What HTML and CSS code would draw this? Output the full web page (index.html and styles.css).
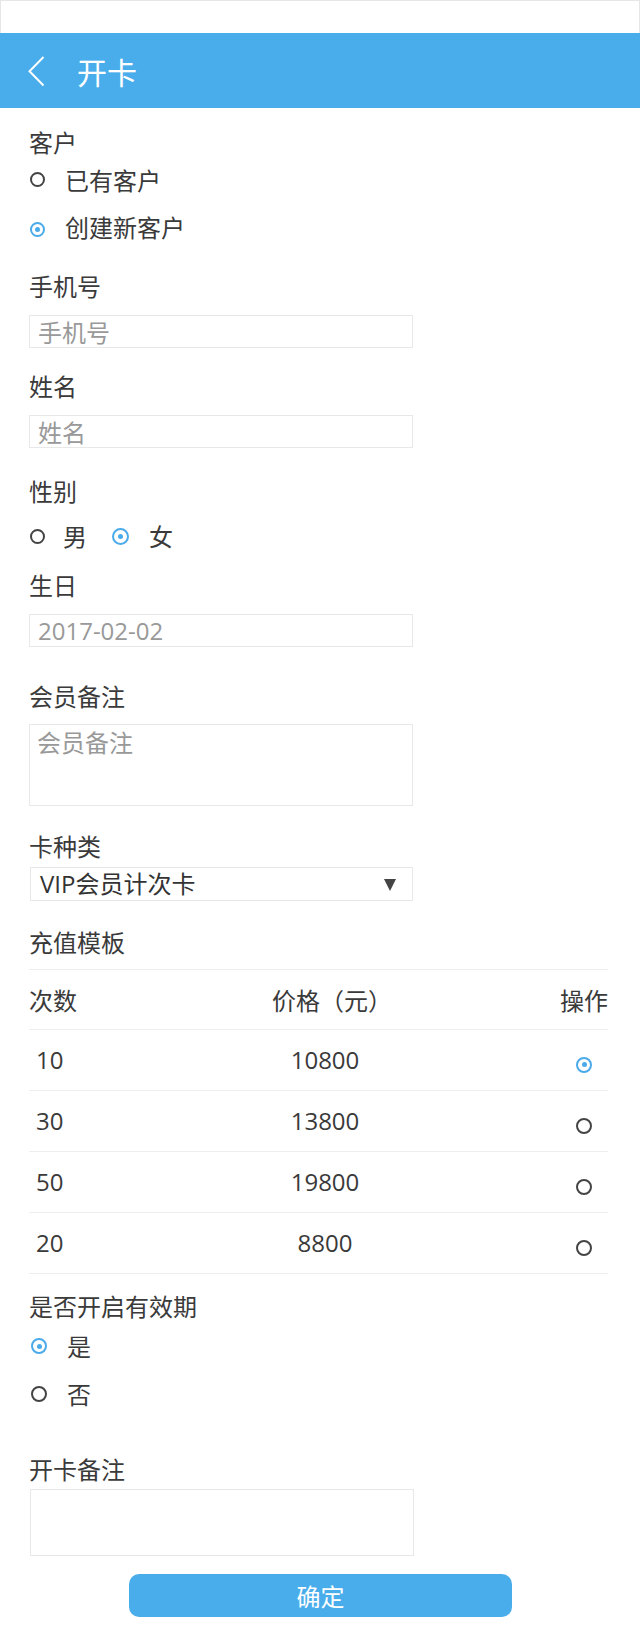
FILE: index.html
```html
<!DOCTYPE html>
<html lang="zh-CN">
<head>
<meta charset="utf-8">
<title>开卡</title>
<link rel="stylesheet" href="styles.css">
</head>
<body>
<div class="status"></div>
<header class="topbar">
  <svg class="back" width="17" height="31" viewBox="0 0 17 31" aria-hidden="true"><path d="M15.5 1 L1.5 15.2 L15.5 29.5" fill="none" stroke="#fff" stroke-width="2"/></svg>
  <h1 class="title">开卡</h1>
</header>
<main class="form">
  <section class="field">
    <div class="label">客户</div>
    <label class="opt opt-a"><input type="radio" name="cust"><span>已有客户</span></label>
    <label class="opt opt-b"><input type="radio" name="cust" checked><span>创建新客户</span></label>
  </section>

  <section class="field f-phone">
    <div class="label">手机号</div>
    <input class="box" type="text" placeholder="手机号">
  </section>

  <section class="field f-name">
    <div class="label">姓名</div>
    <input class="box" type="text" placeholder="姓名">
  </section>

  <section class="field f-sex">
    <div class="label">性别</div>
    <div class="inline-opts">
      <label class="opt-inline"><input type="radio" name="sex"><span>男</span></label>
      <label class="opt-inline"><input type="radio" name="sex" checked><span>女</span></label>
    </div>
  </section>

  <section class="field f-birth">
    <div class="label">生日</div>
    <input class="box latin" type="text" placeholder="2017-02-02">
  </section>

  <section class="field f-memo">
    <div class="label">会员备注</div>
    <textarea class="area" placeholder="会员备注"></textarea>
  </section>

  <section class="field f-kind">
    <div class="label">卡种类</div>
    <div class="select"><span class="latin">VIP会员计次卡</span><i class="caret"></i></div>
  </section>

  <section class="field f-tpl">
    <div class="label">充值模板</div>
    <div class="table">
      <div class="row head">
        <div class="c1">次数</div>
        <div class="c2 price-head">价格（元）</div>
        <div class="c3">操作</div>
      </div>
      <div class="row latin">
        <div class="c1 num">10</div>
        <div class="c2">10800</div>
        <div class="c3"><input class="tradio" type="radio" name="tpl" checked></div>
      </div>
      <div class="row latin">
        <div class="c1 num">30</div>
        <div class="c2">13800</div>
        <div class="c3"><input class="tradio" type="radio" name="tpl"></div>
      </div>
      <div class="row latin">
        <div class="c1 num">50</div>
        <div class="c2">19800</div>
        <div class="c3"><input class="tradio" type="radio" name="tpl"></div>
      </div>
      <div class="row latin">
        <div class="c1 num">20</div>
        <div class="c2">8800</div>
        <div class="c3"><input class="tradio" type="radio" name="tpl"></div>
      </div>
    </div>
  </section>

  <section class="field f-valid">
    <div class="label">是否开启有效期</div>
    <label class="opt opt-c"><input type="radio" name="valid" checked><span>是</span></label>
    <label class="opt opt-d"><input type="radio" name="valid"><span>否</span></label>
  </section>

  <section class="field f-cardmemo">
    <div class="label">开卡备注</div>
    <textarea class="area area-small"></textarea>
  </section>

  <button class="submit" type="button">确定</button>
</main>
</body>
</html>
```

FILE: styles.css
```css
* { box-sizing: border-box; }
html, body { margin: 0; padding: 0; background: #fff; }
body {
  font-family: "Noto Sans CJK SC", "Noto Sans", sans-serif;
  color: #3a3a3a;
  width: 640px;
}
.latin { font-family: "Open Sans", "Noto Sans CJK SC", sans-serif; }
.status {
  height: 33px;
  border: 1px solid #e6e6e6;
  border-bottom: none;
  background: #fff;
}
.topbar {
  height: 75px;
  background: #4aadeb;
  display: flex;
  align-items: center;
  padding-left: 28px;
}
.back { display: block; margin-top: 1px; }
.title {
  margin: 0 0 0 32px;
  font-size: 30px;
  font-weight: normal;
  line-height: 34px;
  color: #fff;
}
.form {
  padding: 19px 0 16px 29px;
}
.label {
  font-size: 24px;
  line-height: 30px;
  height: 30px;
}
.opt {
  display: flex;
  align-items: center;
  height: 30px;
  font-size: 24px;
  line-height: 30px;
}
.opt input, .opt-inline input, .tradio {
  appearance: none;
  -webkit-appearance: none;
  width: 15px;
  height: 15px;
  margin: 0;
  border: 2px solid #444;
  border-radius: 50%;
  background: #fff;
  position: relative;
  flex: none;
}
.opt input:checked, .opt-inline input:checked, .tradio:checked {
  border-color: #4aaaea;
}
.opt input:checked::after, .opt-inline input:checked::after, .tradio:checked::after {
  content: "";
  position: absolute;
  left: 50%;
  top: 50%;
  width: 5px;
  height: 5px;
  margin: -2.5px 0 0 -2.5px;
  border-radius: 50%;
  background: #4aaaea;
}
.opt input { margin-left: 1px; margin-right: 20px; }
.opt-a { margin-top: 8px; }
.opt-a input { margin-top: -2px; }
.opt-b { margin-top: 17px; }
.opt-b input { margin-top: 4px; }
.opt-c { margin-top: 10px; }
.opt-d { margin-top: 18px; }
.opt-c input, .opt-d input { width: 16px; height: 16px; margin-left: 2px; margin-right: 20px; }

.f-phone { margin-top: 29px; }
.f-name { margin-top: 23px; }
.f-sex { margin-top: 28px; }
.f-birth { margin-top: 19px; }
.f-memo { margin-top: 34px; }
.f-kind { margin-top: 25px; }
.f-tpl { margin-top: 26px; }
.f-valid { margin-top: 17px; }
.f-cardmemo { margin-top: 45px; }

.box {
  display: block;
  margin-top: 14px;
  width: 384px;
  height: 33px;
  border: 1px solid #e8e8e8;
  padding: 0 8px;
  font-family: "Noto Sans CJK SC", sans-serif;
  font-size: 24px;
  color: #3a3a3a;
  outline: none;
  background: #fff;
}
.box.latin { font-family: "Open Sans", "Noto Sans CJK SC", sans-serif; }
.box::placeholder, .area::placeholder { color: #999; opacity: 1; }
.area {
  display: block;
  margin-top: 13px;
  width: 384px;
  height: 82px;
  border: 1px solid #e8e8e8;
  padding: 2px 7px;
  font-family: inherit;
  font-size: 24px;
  line-height: 30px;
  resize: none;
  outline: none;
}
.area-small {
  margin-top: 5px;
  margin-left: 1px;
  height: 67px;
}
.inline-opts {
  margin-top: 15px;
  display: flex;
  align-items: center;
  height: 30px;
  font-size: 24px;
  line-height: 30px;
}
.opt-inline {
  display: flex;
  align-items: center;
  margin-right: 25px;
}
.opt-inline input { margin-left: 1px; margin-right: 18px; }
.opt-inline + .opt-inline input { width: 17px; height: 17px; margin-left: 0; margin-right: 20px; }

.select {
  margin-top: 6px;
  margin-left: 1px;
  width: 383px;
  height: 34px;
  border: 1px solid #e8e8e8;
  display: flex;
  align-items: center;
  justify-content: space-between;
  padding: 0 16px 0 9px;
  font-size: 24px;
  line-height: 30px;
  color: #333;
}
.caret {
  width: 0;
  height: 0;
  border-left: 6.5px solid transparent;
  border-right: 6.5px solid transparent;
  border-top: 12px solid #444;
  margin-top: 2px;
}

.table {
  margin-top: 12px;
  width: 579px;
  border-top: 1px solid #eeeeee;
}
.row {
  display: grid;
  grid-template-columns: 61px 470px 48px;
  height: 61px;
  border-bottom: 1px solid #eeeeee;
  align-items: center;
  font-size: 24px;
  line-height: 30px;
}
.row.head { height: 60px; }
.c1 { white-space: nowrap; }
.c2 { text-align: center; white-space: nowrap; }
.c3 { display: flex; justify-content: center; white-space: nowrap; }
.num { padding-left: 7px; }
.price-head { padding-left: 14px; }
.tradio { width: 16px; height: 16px; margin-top: 9px; }

.submit {
  display: block;
  margin: 18px 0 0 100px;
  width: 383px;
  height: 43px;
  border: none;
  border-radius: 10px;
  background: #4aadeb;
  color: #fff;
  font-family: inherit;
  font-size: 24px;
  line-height: 30px;
  padding: 0;
}
```
